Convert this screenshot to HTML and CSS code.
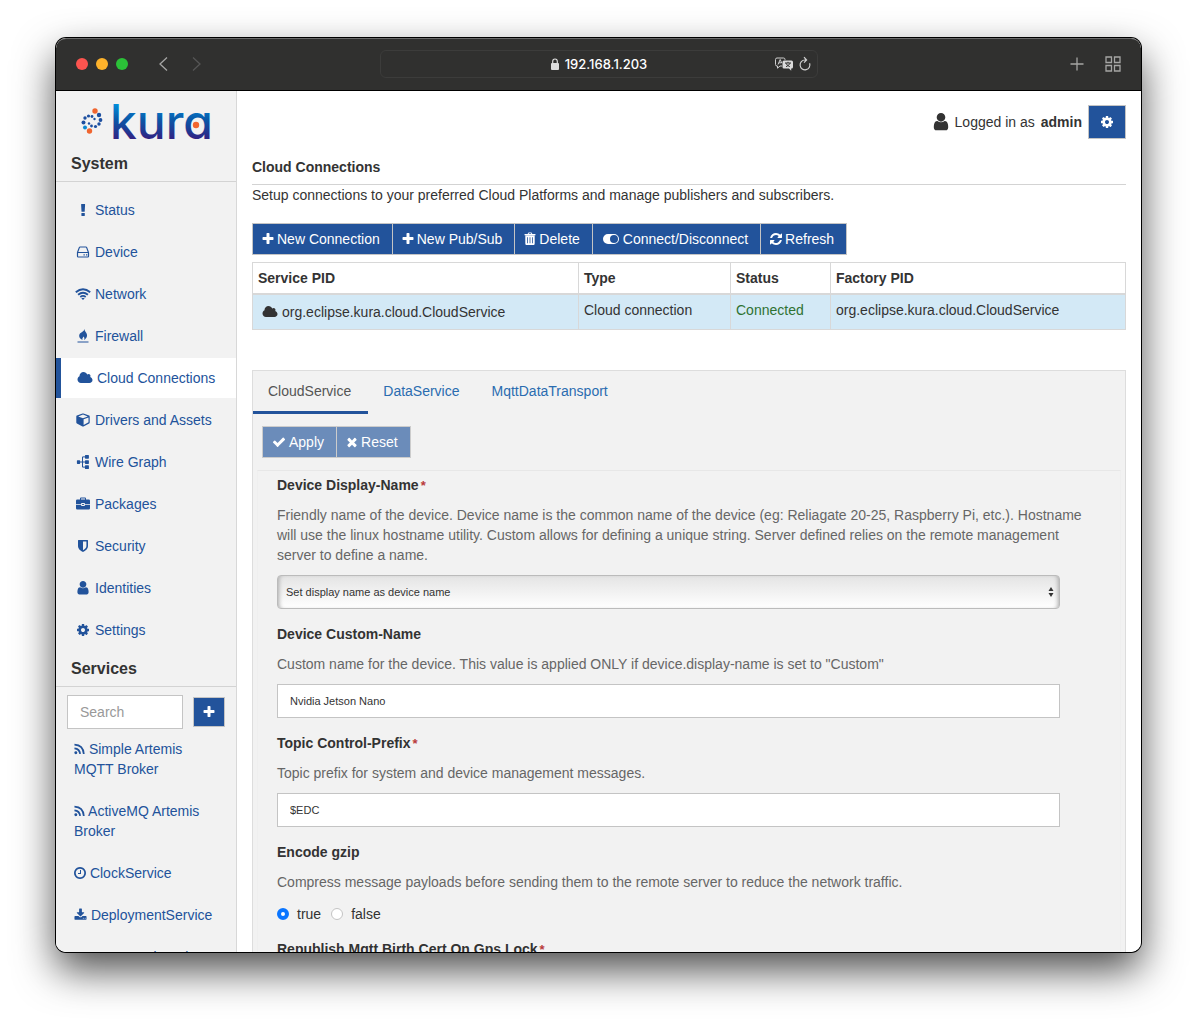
FILE: index.html
```html
<!DOCTYPE html>
<html lang="en">
<head>
<meta charset="utf-8">
<meta name="viewport" content="width=device-width, initial-scale=1">
<title>Kura - Cloud Connections</title>
<link rel="stylesheet" href="styles.css">
</head>
<body>
<svg class="sprite" aria-hidden="true">
  <symbol id="plus" viewBox="128 0 1536 1792"><path d="M1600 736v192q0 40-28 68t-68 28h-416v416q0 40-28 68t-68 28h-192q-40 0-68-28t-28-68v-416h-416q-40 0-68-28t-28-68v-192q0-40 28-68t68-28h416v-416q0-40 28-68t68-28h192q40 0 68 28t28 68v416h416q40 0 68 28t28 68z"/></symbol>
  <symbol id="cog" viewBox="128 0 1536 1792"><path d="M1152 896q0-106-75-181t-181-75-181 75-75 181 75 181 181 75 181-75 75-181zm512-109v222q0 12-8 23t-20 13l-185 28q-19 54-39 91 35 50 107 138 10 12 10 25t-9 23q-27 37-99 108t-94 71q-12 0-26-9l-138-108q-44 23-91 38-16 136-29 186-7 28-36 28h-222q-14 0-24.500-8.500t-11.500-21.500l-28-184q-49-16-90-37l-141 107q-10 9-25 9-14 0-25-11-126-114-165-168-7-10-7-23 0-12 8-23 15-21 51-66.500t54-70.500q-27-50-41-99l-183-27q-13-2-21-12.500t-8-23.500v-222q0-12 8-23t19-13l186-28q14-46 39-92-40-57-107-138-10-12-10-24 0-10 9-23 26-36 98.500-107.500t94.500-71.500q13 0 26 10l138 107q44-23 91-38 16-136 29-186 7-28 36-28h222q14 0 24.500 8.500t11.500 21.500l28 184q49 16 90 37l142-107q9-9 24-9 13 0 25 10 129 119 165 170 7 8 7 22 0 12-8 23-15 21-51 66.500t-54 70.500q26 50 41 98l183 28q13 2 21 12.500t8 23.500z"/></symbol>
  <symbol id="check" viewBox="0 0 1792 1792"><path d="M1671 566q0 40-28 68l-724 724-136 136q-28 28-68 28t-68-28l-136-136-362-362q-28-28-28-68t28-68l136-136q28-28 68-28t68 28l294 295 656-657q28-28 68-28t68 28l136 136q28 28 28 68z"/></symbol>
  <symbol id="times" viewBox="128 0 1536 1792"><path d="M1490 1322q0 40-28 68l-136 136q-28 28-68 28t-68-28l-294-294-294 294q-28 28-68 28t-68-28l-136-136q-28-28-28-68t28-68l294-294-294-294q-28-28-28-68t28-68l136-136q28-28 68-28t68 28l294 294 294-294q28-28 68-28t68 28l136 136q28 28 28 68t-28 68l-294 294 294 294q28 28 28 68z"/></symbol>
  <symbol id="user" viewBox="192 128 1408 1600"><path d="M1536 1399q0 109-62.500 187t-150.500 78h-854q-88 0-150.500-78t-62.500-187q0-85 8.500-160.500t31.500-152 58.500-131 94-89 134.500-34.500q131 128 313 128t313-128q76 0 134.500 34.500t94 89 58.500 131 31.500 152 8.500 160.500zm-256-887q0 159-112.500 271.500t-271.500 112.500-271.500-112.500-112.500-271.500 112.500-271.500 271.500-112.500 271.500 112.500 112.500 271.500z"/></symbol>
  <symbol id="cloud" viewBox="0 0 2048 1792"><path d="M1984 1152q0 159-112.500 271.500t-271.500 112.500h-1088q-185 0-316.500-131.500t-131.500-316.500q0-132 71-241.500t187-163.500q-2-28-2-43 0-212 150-362t362-150q158 0 286.500 88t187.500 230q70-62 166-62 106 0 181 75t75 181q0 75-41 138 129 30 213 134.500t84 239.500z"/></symbol>
  <symbol id="refresh" viewBox="128 0 1536 1792"><path d="M1639 1056q0 5-1 7-64 268-268 434.500t-478 166.500q-146 0-282.500-55t-243.500-157l-129 129q-19 19-45 19t-45-19-19-45v-448q0-26 19-45t45-19h448q26 0 45 19t19 45-19 45l-137 137q71 66 161 102t187 36q134 0 250-65t186-179q11-17 53-117 8-23 30-23h192q13 0 22.500 9.500t9.500 22.500zm25-800v448q0 26-19 45t-45 19h-448q-26 0-45-19t-19-45 19-45l138-138q-148-137-349-137-134 0-250 65t-186 179q-11 17-53 117-8 23-30 23h-199q-13 0-22.500-9.500t-9.500-22.500v-7q65-268 270-434.500t480-166.500q146 0 284 55.500t245 156.500l130-129q19-19 45-19t45 19 19 45z"/></symbol>
  <symbol id="download" viewBox="0 0 1792 1792"><path d="M1344 1344q0-26-19-45t-45-19-45 19-19 45 19 45 45 19 45-19 19-45zm256 0q0-26-19-45t-45-19-45 19-19 45 19 45 45 19 45-19 19-45zm128-224v320q0 40-28 68t-68 28h-1472q-40 0-68-28t-28-68v-320q0-40 28-68t68-28h465l135 136q58 56 136 56t136-56l136-136h464q40 0 68 28t28 68zm-325-569q17 41-14 70l-448 448q-18 19-45 19t-45-19l-448-448q-31-29-14-70 17-39 59-39h256v-448q0-26 19-45t45-19h256q26 0 45 19t19 45v448h256q42 0 59 39z"/></symbol>
  <symbol id="clock" viewBox="128 0 1536 1792"><path d="M1024 544v448q0 14-9 23t-23 9h-320q-14 0-23-9t-9-23v-64q0-14 9-23t23-9h224v-352q0-14 9-23t23-9h64q14 0 23 9t9 23zm416 352q0-148-73-273t-198-198-273-73-273 73-198 198-73 273 73 273 198 198 273 73 273-73 198-198 73-273zm224 0q0 209-103 385.500t-279.500 279.500-385.500 103-385.500-103-279.500-279.500-103-385.500 103-385.500 279.500-279.500 385.500-103 385.500 103 279.500 279.500 103 385.500z"/></symbol>
  <symbol id="bang" viewBox="0 0 14 14"><path d="M5.400 1h3.400q.3 0 .3.400l-.4 7q0 .4-.4.400h-2.400q-.4 0-.4-.4l-.4-7q0-.4.300-.4zM5.700 10h2.800q.3 0 .3.300v2.200q0 .4-.3.400h-2.800q-.3 0-.3-.4v-2.200q0-.3.300-.3z"/></symbol>
  <symbol id="hdd" viewBox="0 0 14 14"><path fill="none" stroke="currentColor" stroke-width="1.200" d="M1.500 7.500 3.300 2.600q.2-.6.900-.6h5.600q.7 0 .9.600l1.800 4.900v3.700q0 .8-.8.800H2.300q-.8 0-.8-.8zM1.500 7.500h11"/><path d="M7.500 9.200h1.300v1.300H7.500zM10 9.200h1.300v1.300H10z"/></symbol>
  <symbol id="wifi" viewBox="0 0 16 14"><g fill="none" stroke="currentColor" stroke-width="1.900"><path d="M.8 5.300q7.200-6 14.400 0M3.100 7.700q4.900-4 9.800 0M5.300 9.900q2.700-2 5.400 0"/></g><path d="M8 13 6.300 11.300q1.700-1.200 3.400 0z"/></symbol>
  <symbol id="flame" viewBox="0 0 14 14"><path d="M8.400 0Q8.500 1.800 10 3.500c1.900 2.400 1.200 5.500-1.900 7.500.6-1.700.3-2.500-.6-3.400-.2 1.100-1.700 1.800-1 3.400C2.900 9.600 2.400 6.200 4.200 4.300 5.600 3 8.200 2.300 8.400 0zM1.500 12.600h11v1h-11z"/></symbol>
  <symbol id="cube" viewBox="0 0 14 14"><path fill-rule="evenodd" d="M7 .4q.3 0 .5.100l5.600 2q.6.200.6.900v6.200q0 .6-.5.900l-5.700 3q-.5.200-1 0l-5.600-3q-.6-.3-.6-.9V3.400q0-.7.600-.9l5.600-2Q6.700.4 7 .4zM7 1.600 2.200 3.400 7 5.200l4.800-1.800zM7.600 12l4.900-2.700V4.500L7.600 6.300z"/></symbol>
  <symbol id="wires" viewBox="0 0 14 14"><path d="M1.500 5.200h2q.6 0 .6.600v2.500q0 .6-.6.600h-2q-.6 0-.6-.6V5.800q0-.6.600-.6zM9.600 0h2.700q.6 0 .6.600v2.500q0 .6-.6.600H9.600q-.6 0-.6-.6V.6q0-.6.600-.6zM9.600 5.200h2.700q.6 0 .6.600v2.500q0 .6-.6.600H9.600q-.6 0-.6-.6V5.800q0-.6.600-.6zM9.600 10.300h2.700q.6 0 .6.600v2.500q0 .6-.6.600H9.600q-.6 0-.6-.6v-2.500q0-.6.600-.6z"/><path fill="none" stroke="currentColor" d="M4 7h5M9 1.900H6.500v10.200H9"/></symbol>
  <symbol id="case" viewBox="0 0 14 14"><path fill-rule="evenodd" d="M4 2.500v-1q0-1 1-1h4q1 0 1 1v1h2.800q1.200 0 1.200 1.200V7H8.800V6H5.200v1H0V3.700q0-1.200 1.200-1.200zM5 2.500h4v-1H5zM0 7.700h5.200v.8q0 .5.500.5h2.600q.5 0 .5-.5v-.8H14v3.600q0 1.200-1.200 1.200H1.200Q0 12.500 0 11.300zM6.100 6.900h1.800v1.200H6.100z"/></symbol>
  <symbol id="shield" viewBox="0 0 14 14"><path fill-rule="evenodd" d="M2.500 1h9q.5 0 .5.500V7c0 3-2.500 4.700-5 6-2.500-1.300-5-3-5-6V1.500q0-.5.500-.5zM7 2.600v8.700C9.200 10 10.400 8.700 10.400 7V2.600z"/></symbol>
  <symbol id="rss" viewBox="0 0 12 14"><circle cx="2" cy="11" r="1.600"/><g fill="none" stroke="currentColor" stroke-width="1.900"><path d="M.5 6.200q5.600.4 6.200 6.200M.5 2.300q9.600.6 10.200 10.100"/></g></symbol>
  <symbol id="terminal" viewBox="0 0 14 14"><path fill="none" stroke="currentColor" stroke-width="1.600" d="m1 3 4 4-4 4M7 12h6"/></symbol>
  <symbol id="trash" viewBox="0 0 12 14"><path fill-rule="evenodd" d="M3.700 2 4.200.8Q4.400.4 5 .4h2q.6 0 .8.400L8.300 2h2.900q.3 0 .3.300v.9H.5v-.9Q.5 2 .8 2zM4.700 2h2.600L7 1.200H5zM1.300 3.600h9.400v7.900q0 1.500-1.200 1.500h-7q-1.200 0-1.200-1.500zM3.200 5.200v6h.8v-6zM5.600 5.200v6h.8v-6zM8 5.200v6h.8v-6z"/></symbol>
  <symbol id="toggle" viewBox="0 0 16 14"><path fill-rule="evenodd" d="M5 2h6a5 5 0 0 1 0 10H5A5 5 0 0 1 5 2zm6 1a4 4 0 0 0 0 8 4 4 0 0 0 0-8z"/></symbol>
</svg>

<div class="window">
  <header class="chrome">
    <div class="lights"><span class="light red"></span><span class="light amber"></span><span class="light green"></span></div>
    <div class="history">
      <button type="button" aria-label="Back"><svg width="10" height="16" viewBox="0 0 10 16"><path d="M9 1.500 2 8l7 6.500"/></svg></button>
      <button type="button" aria-label="Forward" class="dim"><svg width="10" height="16" viewBox="0 0 10 16"><path d="m1 1.500 7 6.500-7 6.500"/></svg></button>
    </div>
    <div class="address">
      <svg class="lock" width="10" height="12" viewBox="0 0 10 12"><rect x="1" y="5" width="8" height="7" rx="1" fill="#dcdcdc"/><path d="M2.700 5.500V3.300a2.300 2.300 0 0 1 4.600 0v2.200" fill="none" stroke="#dcdcdc" stroke-width="1.200"/></svg>
      <span>192.168.1.203</span>
      <div class="address-tools">
        <svg width="20" height="16" viewBox="0 0 20 16"><path d="M8 10H6l-2.500 2.200V10H3q-1.500 0-1.500-1.500v-5Q1.500 2 3 2h6.500Q11 2 11 3.500V4" fill="none" stroke="#cfcfcf"/><path d="m4 8.500 2.200-5 1.500 3.500M5 6.800h2.500" fill="none" stroke="#cfcfcf"/><path d="M10 4.500h7.500q1.500 0 1.500 1.500v5q0 1.500-1.500 1.500h-.3v2.200L15 12.500h-5q-1.500 0-1.500-1.500V6q0-1.500 1.500-1.500z" fill="#dcdcdc"/><path d="M11 7h6M14 5.800V7M12 7.200q1 2.500 3.800 3.500M16 7.200q-1 2.500-4 3.500" fill="none" stroke="#30302f"/></svg>
        <svg width="14" height="16" viewBox="0 0 14 16"><path d="M11.600 7.200A4.900 4.900 0 1 1 7 4h1M6 1.200 8.600 4 6 6.600" fill="none" stroke="#cfcfcf" stroke-width="1.200"/></svg>
      </div>
    </div>
    <div class="chrome-tools">
      <button type="button" aria-label="New tab"><svg width="14" height="14" viewBox="0 0 14 14"><path d="M7 .5v13M.5 7h13"/></svg></button>
      <button type="button" aria-label="Tab overview"><svg width="16" height="16" viewBox="0 0 16 16"><path d="M1 1h5.500v5.500H1zM9.500 1H15v5.500H9.500zM1 9.500h5.500V15H1zM9.500 9.500H15V15H9.500z"/></svg></button>
    </div>
  </header>

  <div class="app">
    <aside class="sidebar">
      <svg class="logo" width="150" height="50" viewBox="0 0 150 50" role="img" aria-label="kura">
        <defs><linearGradient id="brand" x1="0" y1="10" x2="0" y2="47" gradientUnits="userSpaceOnUse"><stop offset="0" stop-color="#0099e5"/><stop offset=".5" stop-color="#0a58a8"/><stop offset="1" stop-color="#2f2585"/></linearGradient></defs>
        <g fill="#1d4fa0"><circle cx="27" cy="24" r="2.200"/><circle cx="28.500" cy="29" r="1.900"/><circle cx="27" cy="33" r="1.700"/><circle cx="23.500" cy="35.500" r="1.600"/><circle cx="19.500" cy="35" r="1.400"/><circle cx="17" cy="32.500" r="1.200"/><circle cx="11.500" cy="31.500" r="2"/><circle cx="13" cy="27" r="1.700"/><circle cx="16.500" cy="25" r="1.600"/><circle cx="20" cy="25.500" r="1.400"/><circle cx="22.500" cy="28" r="1.200"/></g>
        <circle cx="13" cy="36.500" r="2" fill="#0c87cf"/>
        <circle cx="23" cy="20" r="2.700" fill="#f0652f"/><circle cx="17.500" cy="40" r="2.700" fill="#f0652f"/>
        <text class="wordmark" x="38" y="48" fill="url(#brand)">kura</text>
        <circle cx="124" cy="34" r="3.200" fill="#f0652f"/>
      </svg>
      <h2>System</h2>
      <nav>
        <ul class="menu">
          <li><a href="#"><svg class="icon"><use href="#bang"/></svg>Status</a></li>
          <li><a href="#"><svg class="icon"><use href="#hdd"/></svg>Device</a></li>
          <li><a href="#"><svg class="icon wide"><use href="#wifi"/></svg>Network</a></li>
          <li><a href="#"><svg class="icon"><use href="#flame"/></svg>Firewall</a></li>
          <li class="active"><a href="#"><svg class="icon wide"><use href="#cloud"/></svg>Cloud Connections</a></li>
          <li><a href="#"><svg class="icon"><use href="#cube"/></svg>Drivers and Assets</a></li>
          <li><a href="#"><svg class="icon"><use href="#wires"/></svg>Wire Graph</a></li>
          <li><a href="#"><svg class="icon"><use href="#case"/></svg>Packages</a></li>
          <li><a href="#"><svg class="icon"><use href="#shield"/></svg>Security</a></li>
          <li><a href="#"><svg class="icon"><use href="#user"/></svg>Identities</a></li>
          <li><a href="#"><svg class="icon"><use href="#cog"/></svg>Settings</a></li>
        </ul>
      </nav>
      <h2>Services</h2>
      <div class="search">
        <input type="text" placeholder="Search" aria-label="Search services">
        <button type="button" class="btn add" aria-label="Add service"><svg class="icon narrow"><use href="#plus"/></svg></button>
      </div>
      <ul class="services">
        <li><a href="#"><svg class="icon rss"><use href="#rss"/></svg> Simple Artemis MQTT Broker</a></li>
        <li><a href="#"><svg class="icon rss"><use href="#rss"/></svg> ActiveMQ Artemis Broker</a></li>
        <li><a href="#"><svg class="icon narrow"><use href="#clock"/></svg> ClockService</a></li>
        <li><a href="#"><svg class="icon down"><use href="#download"/></svg> DeploymentService</a></li>
        <li><a href="#"><svg class="icon"><use href="#terminal"/></svg> CommandService</a></li>
      </ul>
    </aside>

    <main>
      <div class="account">
        <svg class="icon large"><use href="#user"/></svg>
        <span>Logged in as</span> <strong>admin</strong>
        <button type="button" class="btn gear" aria-label="Account settings"><svg class="icon"><use href="#cog"/></svg></button>
      </div>
      <h1>Cloud Connections</h1>
      <p class="intro">Setup connections to your preferred Cloud Platforms and manage publishers and subscribers.</p>
      <div class="group">
        <button type="button" class="btn"><svg class="icon narrow"><use href="#plus"/></svg>New Connection</button>
        <button type="button" class="btn"><svg class="icon narrow"><use href="#plus"/></svg>New Pub/Sub</button>
        <button type="button" class="btn"><svg class="icon narrow"><use href="#trash"/></svg>Delete</button>
        <button type="button" class="btn"><svg class="icon toggle"><use href="#toggle"/></svg>Connect/Disconnect</button>
        <button type="button" class="btn"><svg class="icon narrow"><use href="#refresh"/></svg>Refresh</button>
      </div>
      <table>
        <colgroup><col class="col-pid"><col class="col-type"><col class="col-status"><col></colgroup>
        <thead><tr><th>Service PID</th><th>Type</th><th>Status</th><th>Factory PID</th></tr></thead>
        <tbody><tr>
          <td><span class="pid"><svg class="icon wide"><use href="#cloud"/></svg>org.eclipse.kura.cloud.CloudService</span></td>
          <td>Cloud connection</td><td class="ok">Connected</td><td>org.eclipse.kura.cloud.CloudService</td>
        </tr></tbody>
      </table>

      <section class="panel">
        <nav class="tabs"><a href="#" class="current">CloudService</a><a href="#">DataService</a><a href="#">MqttDataTransport</a></nav>
        <div class="group form-actions">
          <button type="button" class="btn" disabled><svg class="icon"><use href="#check"/></svg>Apply</button>
          <button type="button" class="btn" disabled><svg class="icon narrow"><use href="#times"/></svg>Reset</button>
        </div>
        <form class="fields">
          <div class="field">
            <label for="display-name">Device Display-Name<span class="req">*</span></label>
            <p>Friendly name of the device. Device name is the common name of the device (eg: Reliagate 20-25, Raspberry Pi, etc.). Hostname will use the linux hostname utility. Custom allows for defining a unique string. Server defined relies on the remote management server to define a name.</p>
            <div class="select">
              <select id="display-name"><option>Set display name as device name</option></select>
              <svg width="6" height="10" viewBox="0 0 6 10"><path d="M3 0 5.500 4h-5zM3 10 .5 6h5z"/></svg>
            </div>
          </div>
          <div class="field">
            <label for="custom-name">Device Custom-Name</label>
            <p>Custom name for the device. This value is applied ONLY if device.display-name is set to "Custom"</p>
            <input type="text" id="custom-name" value="Nvidia Jetson Nano">
          </div>
          <div class="field">
            <label for="prefix">Topic Control-Prefix<span class="req">*</span></label>
            <p>Topic prefix for system and device management messages.</p>
            <input type="text" id="prefix" value="$EDC">
          </div>
          <fieldset class="field">
            <legend>Encode gzip</legend>
            <p>Compress message payloads before sending them to the remote server to reduce the network traffic.</p>
            <div class="radios">
              <label><input type="radio" name="gzip" checked>true</label>
              <label><input type="radio" name="gzip">false</label>
            </div>
          </fieldset>
          <fieldset class="field">
            <legend>Republish Mqtt Birth Cert On Gps Lock<span class="req">*</span></legend>
          </fieldset>
        </form>
      </section>
    </main>
  </div>
</div>
</body>
</html>
```

FILE: styles.css
```css
* { box-sizing: border-box; }

body {
  margin: 0;
  padding: 38px 56px 74px;
  min-height: 100vh;
  background: #fff;
  color: #333;
  font: 14px/20px "Liberation Sans", Arial, sans-serif;
  overflow: hidden;
}

h1, h2, p, ul, fieldset, legend { margin: 0; padding: 0; border: 0; }
ul { list-style: none; }
button, input, select { font: inherit; color: inherit; }
a { color: #22539b; text-decoration: none; }
.sprite { display: none; }

.icon { width: 14px; height: 14px; flex: none; fill: currentColor; }
.icon.wide { width: 16px; }
.icon.narrow { width: 12px; }
.icon.toggle { width: 18px; }
.icon.large { width: 16px; height: 18px; }

/* Browser window */
.window {
  display: flex;
  flex-direction: column;
  height: calc(100vh - 112px);
  border-radius: 10px;
  overflow: hidden;
  box-shadow: 0 0 0 1px #000, 0 18px 40px rgba(0, 0, 0, .7);
}

.chrome {
  flex: none;
  display: grid;
  grid-template-columns: 1fr 438px 1fr;
  align-items: center;
  height: 53px;
  padding: 0 20px 2px;
  background: #30302f;
  border-top: 1px solid #6a6a6a;
  border-bottom: 1px solid #000;
  border-radius: 10px 10px 0 0;
}
.chrome button { display: flex; padding: 0; border: 0; background: none; }
.chrome button svg { fill: none; stroke: #a5a5a4; stroke-width: 1.3; }
.chrome .dim svg { stroke: #555; }
.lights { display: flex; gap: 8px; grid-area: 1 / 1; }
.light { width: 12px; height: 12px; border-radius: 50%; }
.red { background: #fc544f; }
.amber { background: #fdb22b; }
.green { background: #2bc138; }
.history { grid-area: 1 / 1; display: flex; gap: 24px; padding-left: 82px; }
.address {
  grid-area: 1 / 2;
  position: relative;
  display: flex;
  align-items: center;
  justify-content: center;
  gap: 5px;
  height: 28px;
  border: 1px solid #3c3c3b;
  border-radius: 6px;
  color: #fff;
  font: 500 13px/16px Inter, sans-serif;
}
.address-tools { position: absolute; right: 5px; display: flex; gap: 4px; }
.chrome-tools { display: flex; justify-content: flex-end; align-items: center; gap: 21px; }

.app { flex: 1; min-height: 0; display: flex; background: #fff; }

/* Sidebar */
.sidebar {
  flex: none;
  width: 181px;
  overflow: hidden;
  background: #f2f2f2;
  border-right: 1px solid #d8d8d8;
}
.logo { display: block; margin-left: 16px; }
.wordmark { font: 500 48px Inter, sans-serif; font-feature-settings: "cv11"; }
.sidebar h2 {
  padding: 15px 15px 7px;
  border-bottom: 1px solid #d3d3d3;
  font-size: 16px;
  line-height: 20px;
}
.sidebar .logo + h2 { padding-top: 13px; }
.menu { padding-top: 8px; }
.menu li { margin-bottom: 2px; }
.menu li:last-child { margin-bottom: -6px; }
.menu a { display: flex; align-items: center; gap: 5px; height: 40px; padding-left: 20px; }
.menu .wide { margin: 0 -1px; }
.menu .active a { padding-left: 17px; border-left: 5px solid #22539b; background: #fff; }
.search { display: flex; align-items: center; justify-content: space-between; padding: 8px 11px 0; }
.search input {
  width: 116px;
  height: 34px;
  padding: 0 12px;
  border: 1px solid #c4c4c4;
  background: #fff;
}
.search input::placeholder { color: #999; opacity: 1; }
.services li { padding: 10px 18px; margin-bottom: 2px; }
.services .icon { display: inline-block; vertical-align: -2px; }
.services .rss { width: 11px; }
.services .down { width: 13px; }

.btn {
  display: flex;
  align-items: center;
  justify-content: center;
  gap: 3px;
  height: 32px;
  padding: 0 12px 0 9px;
  border: 1px solid #c4c4c4;
  background: #22539b;
  color: #fff;
  white-space: nowrap;
}
.btn.add { width: 32px; height: 30px; padding: 0; }
.btn.gear { width: 38px; height: 34px; padding: 0; }
.group { display: flex; }
.group .btn + .btn { margin-left: -1px; }

/* Main column */
main { flex: 1; min-width: 0; overflow: hidden; padding: 14px 15px 0; }
.account { display: flex; align-items: center; justify-content: flex-end; gap: 6px; }
h1 { padding: 18px 0 7px; border-bottom: 1px solid #d3d3d3; font-size: 14px; line-height: 20px; }
.intro { margin-bottom: 18px; }

table { width: 100%; margin: 7px 0 40px; border-collapse: collapse; table-layout: fixed; }
.col-pid { width: 326px; }
.col-type { width: 152px; }
.col-status { width: 100px; }
th, td { padding: 5px; border: 1px solid #d8d8d8; text-align: left; vertical-align: top; }
th { border-bottom-width: 2px; }
td { height: 35px; background: #d3e9f6; }
.pid { display: flex; align-items: center; gap: 4px; padding: 2px 0 0 4px; }
.ok { color: #2f7233; }

.panel { border: 1px solid #ddd; background: #f2f2f2; }
.tabs { display: flex; }
.tabs a { padding: 10px 17px 10px 15px; border-bottom: 3px solid transparent; color: #2a6cb0; }
.tabs .current { border-color: #22539b; color: #555; }
.form-actions { padding: 12px 9px; }
.form-actions .btn { background: #6b8cba; border-color: #ccc; }
.fields { margin: 0 4px; padding: 4px 19px; border: 1px solid #efefef; border-top-color: #e7e7e7; }
.field { margin-bottom: 15px; }
.field > label, legend { display: block; font-weight: bold; }
.req { margin-left: 2px; color: #b93a3a; font-size: 13px; line-height: 1; }
.field p { margin: 10px 0; color: #666; }
.field > input, .select { display: block; width: 95%; height: 34px; font-size: 11px; }
.field > input { padding: 0 12px; border: 1px solid #c4c4c4; background: #fff; }
.select { position: relative; }
.select select {
  width: 100%;
  height: 34px;
  padding: 0 8px;
  appearance: none;
  border: 1px solid #bbb;
  border-radius: 4px;
  background: linear-gradient(#e4e4e4, #fff);
  box-shadow: inset 4px 0 4px -3px #aaa, inset -4px 0 4px -3px #aaa;
}
.select svg { position: absolute; right: 6px; top: 12px; fill: #333; pointer-events: none; }
.radios { display: flex; gap: 10px; padding-top: 2px; }
.radios label { display: flex; align-items: center; gap: 8px; }
.radios input {
  appearance: none;
  width: 12px;
  height: 12px;
  margin: 0;
  border: 1px solid #c4c4c4;
  border-radius: 50%;
  background: #fff;
}
.radios input:checked { border: 4px solid #0a75ff; }
```
